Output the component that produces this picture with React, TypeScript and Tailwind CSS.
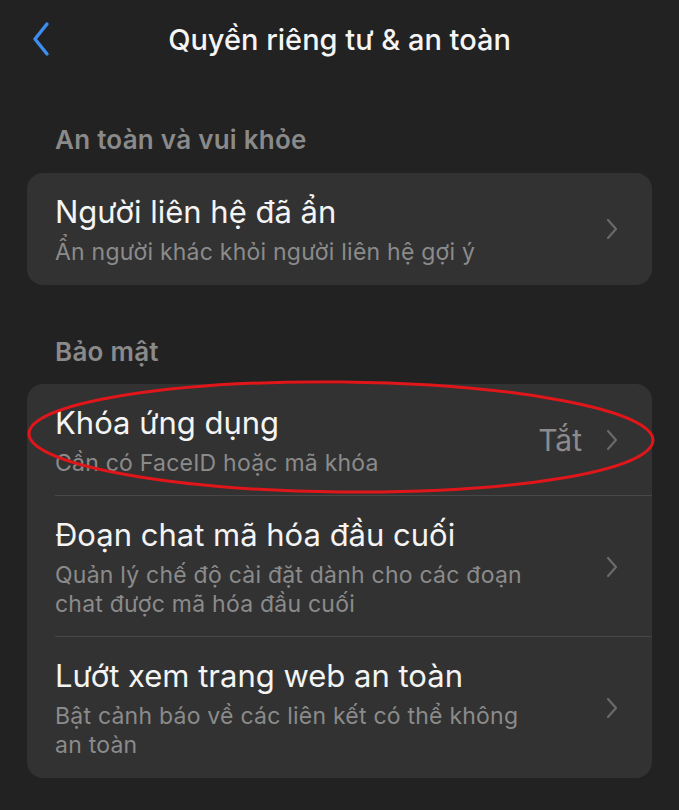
import React from "react";

function Chevron() {
  return (
    <svg width="12" height="22" viewBox="0 0 12 22" fill="none" className="shrink-0">
      <path d="M2 2l8 9-8 9" stroke="#6a6a6a" strokeWidth="2.2" strokeLinecap="round" strokeLinejoin="round" />
    </svg>
  );
}

function Row({ title, sub, value, divider }: { title: string; sub: string[]; value?: string; divider?: boolean }) {
  return (
    <div className="relative flex items-center pl-[28px] pr-[34px]">
      <div className="flex-1 pt-[21px] pb-[18px]">
        <div className="text-[31px] leading-[36px] text-[#f4f4f4]">{title}</div>
        <div className="mt-[8px] text-[23px] leading-[29px] tracking-[0.01em] text-[#8b8b8b]">
          {sub.map((s, i) => (
            <div key={i}>{s}</div>
          ))}
        </div>
      </div>
      {value && <span className="mr-[24px] text-[30px] text-[#8b8b8b]">{value}</span>}
      <Chevron />
      {divider && <div className="absolute bottom-0 left-[28px] right-0 h-px bg-[#474747]" />}
    </div>
  );
}

export default function App() {
  return (
    <div className="relative min-h-[810px] w-[679px] bg-[#222222]" style={{ fontFamily: "Inter, 'Noto Sans', sans-serif" }}>
      <div className="relative flex h-[80px] items-center justify-center">
        <svg width="22" height="36" viewBox="0 0 22 36" className="absolute left-[30px] top-[21px]" fill="none">
          <path d="M17 3L5 18l12 15" stroke="#3d8ef0" strokeWidth="3.4" strokeLinecap="round" strokeLinejoin="round" />
        </svg>
        <span className="text-[29px] font-medium text-[#f5f5f5]">Quyền riêng tư &amp; an toàn</span>
      </div>
      <div className="px-[27px]">
        <div className="mt-[45px] pl-[28px] text-[26px] font-semibold leading-[30px] tracking-[0.01em] text-[#8a8a8a]">An toàn và vui khỏe</div>
        <div className="mt-[18px] overflow-hidden rounded-[16px] bg-[#323232]">
          <Row title="Người liên hệ đã ẩn" sub={["Ẩn người khác khỏi người liên hệ gợi ý"]} />
        </div>
        <div className="mt-[52px] pl-[28px] text-[26px] font-semibold leading-[30px] tracking-[0.01em] text-[#8a8a8a]">Bảo mật</div>
        <div className="mt-[17px] overflow-hidden rounded-[16px] bg-[#323232]">
          <Row title="Khóa ứng dụng" sub={["Cần có FaceID hoặc mã khóa"]} value="Tắt" divider />
          <Row title="Đoạn chat mã hóa đầu cuối" sub={["Quản lý chế độ cài đặt dành cho các đoạn", "chat được mã hóa đầu cuối"]} divider />
          <Row title="Lướt xem trang web an toàn" sub={["Bật cảnh báo về các liên kết có thể không", "an toàn"]} />
        </div>
      </div>
      <svg width="679" height="810" className="pointer-events-none absolute left-0 top-0" fill="none">
        <ellipse cx="341" cy="437" rx="312" ry="55" stroke="#e0161b" strokeWidth="3" transform="rotate(0.6 341 437)" />
      </svg>
    </div>
  );
}
